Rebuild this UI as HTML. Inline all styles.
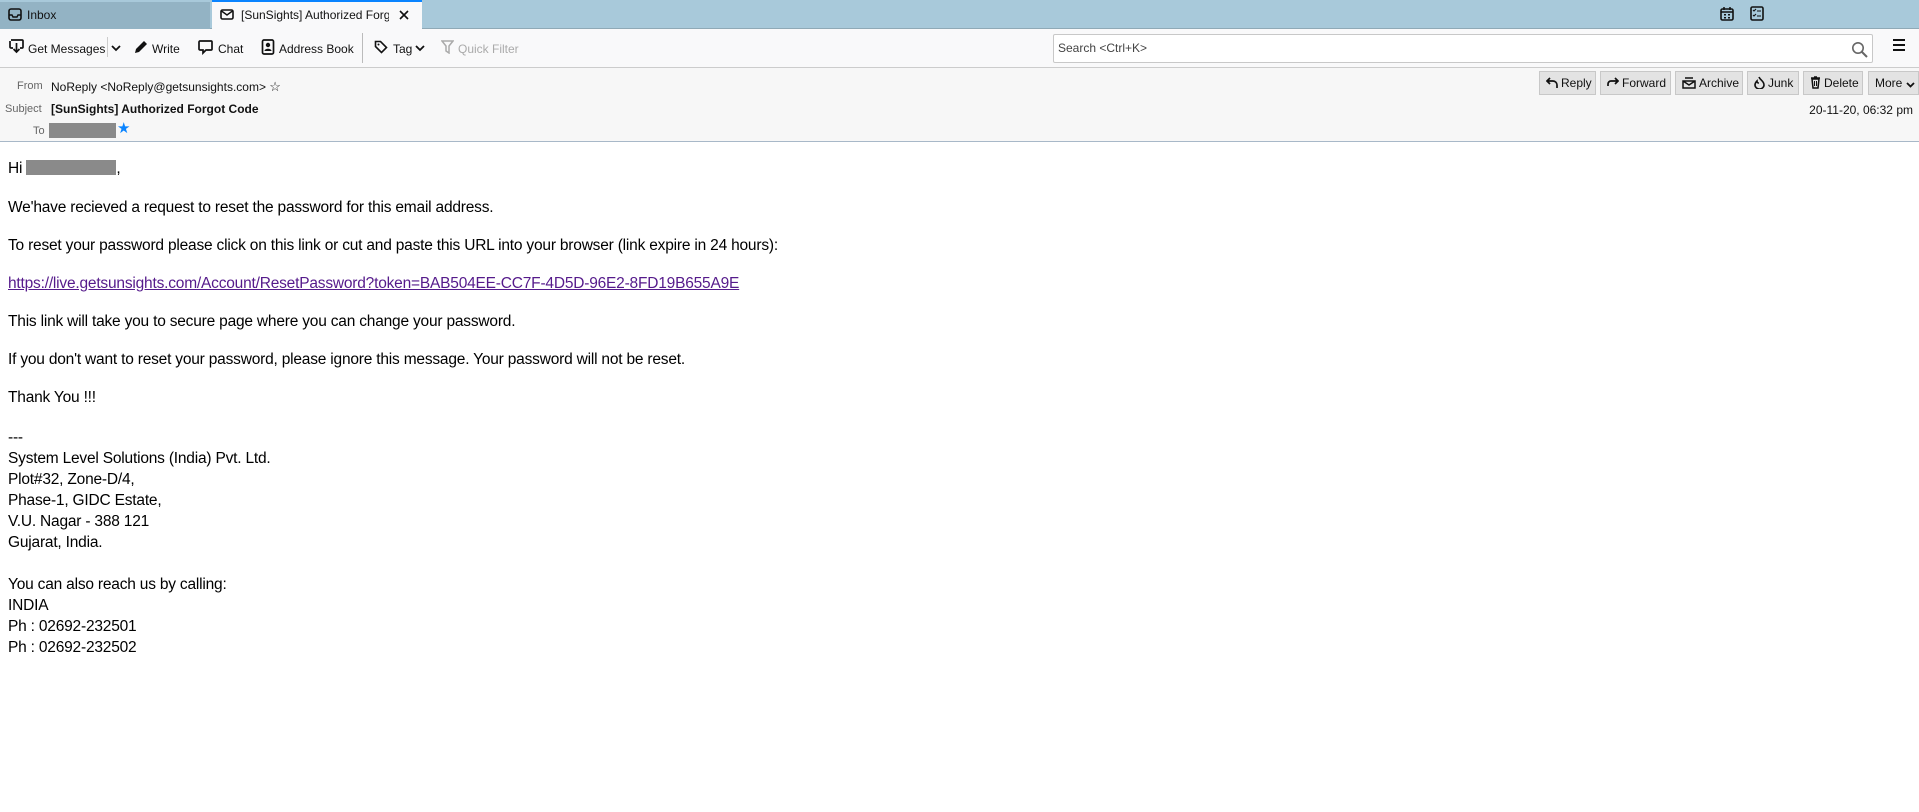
<!DOCTYPE html>
<html><head><meta charset="utf-8"><style>
*{margin:0;padding:0;box-sizing:border-box}
body{width:1919px;height:812px;background:#fff;font-family:"Liberation Sans",sans-serif;position:relative;overflow:hidden;color:#0c0c0d}
.abs{position:absolute;white-space:nowrap}
#tabs{position:absolute;left:0;top:0;width:1919px;height:29px;background:#a8c9da;border-bottom:1px solid #8fa9b6}
#inbox{position:absolute;left:0;top:2px;width:210px;height:27px;background:#93b3c4}
#tab2{position:absolute;left:212px;top:0;width:210px;height:30px;background:#f9f9fa;border-top:2px solid #0a84ff}
#tb{position:absolute;left:0;top:29px;width:1919px;height:39px;background:#f9f9fa;border-bottom:1px solid #ccc}
.t{font-size:12px;color:#111}
#search{position:absolute;left:1053px;top:34px;width:820px;height:29px;background:#fff;border:1px solid #c8c8c8;border-radius:2px}
#hdr{position:absolute;left:0;top:68px;width:1919px;height:74px;background:#f7f7f7;border-bottom:1px solid #a8b8c8}
.btn{position:absolute;top:71px;height:24px;background:#e3e3e3;border:1px solid #c8c8c8;font-size:12px;line-height:22px;padding-left:6px;color:#111;white-space:nowrap;overflow:hidden}
.btn svg{vertical-align:-2px;margin-right:3px}
.lbl{font-size:11px;color:#666}
.b{font-size:15.5px;color:#000;position:absolute;left:8px;white-space:nowrap;letter-spacing:-0.2px}
a{color:#551a8b}
</style></head><body>
<div id="tabs">
 <div id="inbox"></div>
 <svg class="abs" style="left:8px;top:8px" width="14" height="13"><rect x="1" y="1" width="12" height="11" rx="2" fill="none" stroke="#111" stroke-width="1.6"/><path d="M1 7h3l1 2h4l1-2h3" fill="none" stroke="#111" stroke-width="1.4"/></svg>
 <div class="abs t" style="left:27px;top:8px">Inbox</div>
 <div id="tab2"></div>
 <svg class="abs" style="left:220px;top:9px" width="14" height="11"><rect x="1" y="1" width="12" height="9" rx="1.5" fill="none" stroke="#111" stroke-width="1.6"/><path d="M1.5 2l5.5 4 5.5-4" fill="none" stroke="#111" stroke-width="1.4"/></svg>
 <div class="abs t" style="left:241px;top:8px;width:148px;overflow:hidden">[SunSights] Authorized Forgot Code</div>
 <svg class="abs" style="left:399px;top:10px" width="10" height="10"><path d="M1 1l8 8M9 1l-8 8" stroke="#111" stroke-width="1.6"/></svg>
 <svg class="abs" style="left:1720px;top:7px" width="14" height="14"><rect x="1" y="2" width="12" height="11" rx="1.5" fill="none" stroke="#111" stroke-width="1.6"/><path d="M4 0v3M10 0v3M1 5h12" stroke="#111" stroke-width="1.5"/><path d="M4 7h2v1.5H4zM8 7h2v1.5H8zM4 10h2v1.5H4zM8 10h2v1.5H8z" fill="#111"/></svg>
 <svg class="abs" style="left:1750px;top:6px" width="14" height="15"><rect x="1" y="1" width="12" height="13" rx="1.5" fill="none" stroke="#111" stroke-width="1.6"/><path d="M3 4l1 1 2-2M3 9l1 1 2-2M7 5h4M7 10h4" stroke="#111" stroke-width="1.1" fill="none"/></svg>
</div>
<div id="tb">
 <svg class="abs" style="left:9px;top:10px" width="15" height="15"><path d="M2 1h11a1 1 0 011 1v6a1 1 0 01-1 1h-2M4 9H2a1 1 0 01-1-1V2" fill="none" stroke="#111" stroke-width="1.7"/><path d="M7.5 4v9M4.5 10l3 3 3-3" fill="none" stroke="#111" stroke-width="1.7"/></svg>
 <div class="abs t" style="left:28px;top:13px">Get Messages</div>
 <div class="abs" style="left:107px;top:8px;width:1px;height:20px;background:#ccc"></div>
 <svg class="abs" style="left:111px;top:16px" width="10" height="7"><path d="M1 1l4 4 4-4" fill="none" stroke="#111" stroke-width="1.8"/></svg>
 <svg class="abs" style="left:134px;top:11px" width="14" height="14"><path d="M1 13l1-4 8-8 3 3-8 8z" fill="#111"/></svg>
 <div class="abs t" style="left:152px;top:13px">Write</div>
 <svg class="abs" style="left:198px;top:11px" width="15" height="15"><path d="M2 1h11a1 1 0 011 1v7a1 1 0 01-1 1H8l-3 3v-3H2a1 1 0 01-1-1V2a1 1 0 011-1z" fill="none" stroke="#111" stroke-width="1.7"/></svg>
 <div class="abs t" style="left:218px;top:13px">Chat</div>
 <svg class="abs" style="left:261px;top:10px" width="14" height="16"><rect x="1.5" y="1" width="11" height="14" rx="1.5" fill="none" stroke="#111" stroke-width="1.7"/><circle cx="7" cy="6" r="2.2" fill="#111"/><path d="M3.5 12c0-3 7-3 7 0z" fill="#111"/></svg>
 <div class="abs t" style="left:279px;top:13px">Address Book</div>
 <div class="abs" style="left:362px;top:4px;width:1px;height:30px;background:#bbb"></div>
 <svg class="abs" style="left:374px;top:11px" width="14" height="14"><path d="M1.5 1.5h5l6 6-5 5-6-6z" fill="none" stroke="#111" stroke-width="1.6"/><circle cx="4.5" cy="4.5" r="1" fill="#111"/></svg>
 <div class="abs t" style="left:393px;top:13px">Tag</div>
 <svg class="abs" style="left:415px;top:16px" width="10" height="7"><path d="M1 1l4 4 4-4" fill="none" stroke="#111" stroke-width="1.8"/></svg>
 <svg class="abs" style="left:441px;top:11px" width="13" height="14"><path d="M1 1h11l-4 5v7l-3-2V6z" fill="none" stroke="#aaa" stroke-width="1.5"/></svg>
 <div class="abs t" style="left:458px;top:13px;color:#aaa">Quick Filter</div>
</div>
<div id="search"><div class="abs" style="left:4px;top:6px;font-size:12px;color:#444">Search &lt;Ctrl+K&gt;</div>
 <svg class="abs" style="left:797px;top:6px" width="17" height="17"><circle cx="7" cy="7" r="5.2" fill="none" stroke="#666" stroke-width="1.6"/><path d="M11 11l5 5" stroke="#666" stroke-width="2"/></svg></div>
<div class="abs" style="left:1893px;top:39px;width:12px;height:2px;background:#111;box-shadow:0 5px #111,0 10px #111"></div>
<div id="hdr"></div>
<div class="abs lbl" style="left:17px;top:80px">From</div>
<div class="abs t" style="left:51px;top:79px">NoReply &lt;NoReply@getsunsights.com&gt; <span style="font-size:13px">☆</span></div>
<div class="abs lbl" style="left:5px;top:103px">Subject</div>
<div class="abs t" style="left:51px;top:102px;font-weight:bold">[SunSights] Authorized Forgot Code</div>
<div class="abs lbl" style="left:33px;top:125px">To</div>
<div class="abs" style="left:49px;top:123px;width:67px;height:15px;background:#8a8a8a"></div>
<div class="abs" style="left:117px;top:119px;font-size:15px;color:#0a84ff">★</div>
<div class="btn" style="left:1539px;width:57px"><svg width="12" height="12"><path d="M4 1L1 4l3 3M1 4h6a4 4 0 014 4v3" fill="none" stroke="#111" stroke-width="1.7"/></svg>Reply</div>
<div class="btn" style="left:1600px;width:71px"><svg width="12" height="12"><path d="M1 9V7a3 3 0 013-3h7M8 1l3 3-3 3" fill="none" stroke="#111" stroke-width="1.7"/></svg>Forward</div>
<div class="btn" style="left:1675px;width:68px"><svg width="14" height="12"><path d="M3 1h8M1 4h12v7H1zM1 4l6 4 6-4" fill="none" stroke="#111" stroke-width="1.5"/></svg>Archive</div>
<div class="btn" style="left:1747px;width:52px"><svg width="11" height="13"><path d="M5 1c1 3 5 4 5 8a4.5 4 0 01-9 0c0-2 1-3 2-4 0 2 1 2 2 2" fill="none" stroke="#111" stroke-width="1.6"/></svg>Junk</div>
<div class="btn" style="left:1803px;width:60px"><svg width="11" height="13"><path d="M1 2h9M4 1h3M2 3h7l-1 9H3z" fill="none" stroke="#111" stroke-width="1.5"/><path d="M4.5 5v5M6.5 5v5" stroke="#111"/></svg>Delete</div>
<div class="btn" style="left:1868px;width:51px">More <svg width="9" height="7" style="margin:0"><path d="M1 1l3.5 3.5L8 1" fill="none" stroke="#111" stroke-width="1.8"/></svg></div>
<div class="abs t" style="right:6px;top:103px">20-11-20, 06:32 pm</div>

<div class="b" style="top:160px">Hi <span style="display:inline-block;width:90px;height:15px;background:#8a8a8a;vertical-align:-2px"></span>,</div>
<div class="b" style="top:199px">We'have recieved a request to reset the password for this email address.</div>
<div class="b" style="top:237px">To reset your password please click on this link or cut and paste this URL into your browser (link expire in 24 hours):</div>
<div class="b" style="top:275px"><a href="#">https://live.getsunsights.com/Account/ResetPassword?token=BAB504EE-CC7F-4D5D-96E2-8FD19B655A9E</a></div>
<div class="b" style="top:313px">This link will take you to secure page where you can change your password.</div>
<div class="b" style="top:351px">If you don't want to reset your password, please ignore this message. Your password will not be reset.</div>
<div class="b" style="top:389px">Thank You !!!</div>
<div class="b" style="top:427px;line-height:21px">---<br>System Level Solutions (India) Pvt. Ltd.<br>Plot#32, Zone-D/4,<br>Phase-1, GIDC Estate,<br>V.U. Nagar - 388 121<br>Gujarat, India.<br><br>You can also reach us by calling:<br>INDIA<br>Ph : 02692-232501<br>Ph : 02692-232502</div>
</body></html>
